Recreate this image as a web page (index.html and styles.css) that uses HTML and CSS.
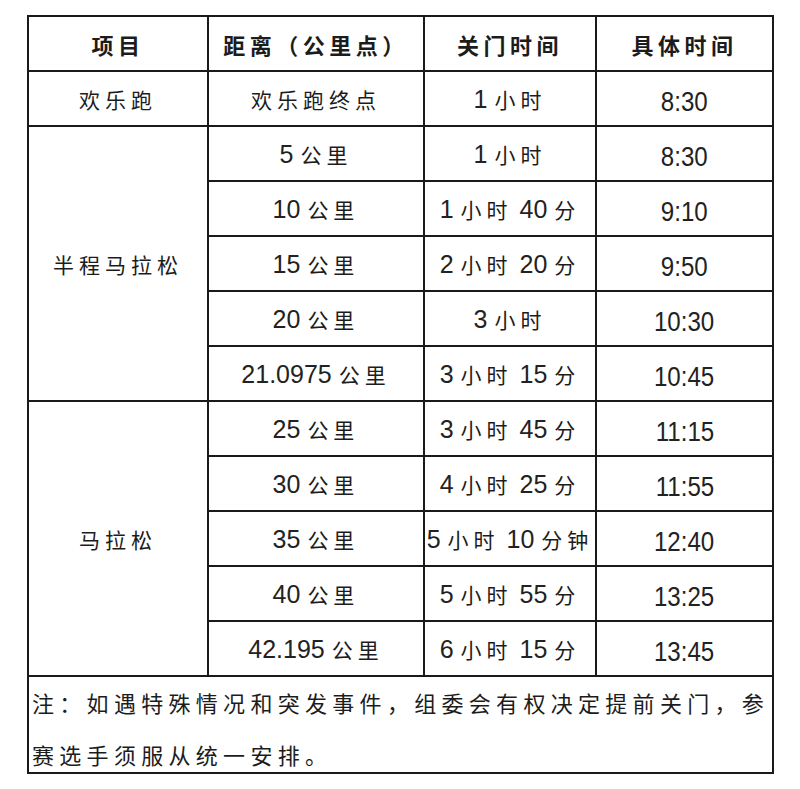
FILE: index.html
```
<!DOCTYPE html>
<html lang="zh-CN">
<head>
<meta charset="utf-8">
<link rel="stylesheet" href="styles.css">
</head>
<body>
<table class="sched">
  <colgroup>
    <col class="c1"><col class="c2"><col class="c3"><col class="c4">
  </colgroup>
  <thead>
    <tr class="head"><th>项目</th><th>距离（公里点）</th><th>关门时间</th><th>具体时间</th></tr>
  </thead>
  <tbody>
    <tr><td>欢乐跑</td><td>欢乐跑终点</td><td><span class="n">1 </span>小时</td><td class="t"><span class="tn">8:30</span></td></tr>
    <tr><td rowspan="5">半程马拉松</td><td><span class="n">5 </span>公里</td><td><span class="n">1 </span>小时</td><td class="t"><span class="tn">8:30</span></td></tr>
    <tr><td><span class="n">10 </span>公里</td><td><span class="n">1 </span>小时<span class="n"> 40 </span>分</td><td class="t"><span class="tn">9:10</span></td></tr>
    <tr><td><span class="n">15 </span>公里</td><td><span class="n">2 </span>小时<span class="n"> 20 </span>分</td><td class="t"><span class="tn">9:50</span></td></tr>
    <tr><td><span class="n">20 </span>公里</td><td><span class="n">3 </span>小时</td><td class="t"><span class="tn">10:30</span></td></tr>
    <tr><td><span class="n">21.0975 </span>公里</td><td><span class="n">3 </span>小时<span class="n"> 15 </span>分</td><td class="t"><span class="tn">10:45</span></td></tr>
    <tr><td rowspan="5">马拉松</td><td><span class="n">25 </span>公里</td><td><span class="n">3 </span>小时<span class="n"> 45 </span>分</td><td class="t"><span class="tn">11:15</span></td></tr>
    <tr><td><span class="n">30 </span>公里</td><td><span class="n">4 </span>小时<span class="n"> 25 </span>分</td><td class="t"><span class="tn">11:55</span></td></tr>
    <tr><td><span class="n">35 </span>公里</td><td><span class="n">5 </span>小时<span class="n"> 10 </span>分钟</td><td class="t"><span class="tn">12:40</span></td></tr>
    <tr><td><span class="n">40 </span>公里</td><td><span class="n">5 </span>小时<span class="n"> 55 </span>分</td><td class="t"><span class="tn">13:25</span></td></tr>
    <tr><td><span class="n">42.195 </span>公里</td><td><span class="n">6 </span>小时<span class="n"> 15 </span>分</td><td class="t"><span class="tn">13:45</span></td></tr>
    <tr class="note"><td colspan="4"><div class="note-text">注：如遇特殊情况和突发事件，组委会有权决定提前关门，参赛选手须服从统一安排。</div></td></tr>
  </tbody>
</table>
</body>
</html>
```
FILE: styles.css
```
html, body {
  margin: 0;
  padding: 0;
  background: #ffffff;
}
body {
  padding: 15px 0 0 27px;
  color: #1c1c1c;
  font-family: "Noto Sans CJK SC", sans-serif;
}
.sched {
  border-collapse: collapse;
  table-layout: fixed;
  width: 745px;
}
.c1 { width: 180px; }
.c2 { width: 216px; }
.c3 { width: 172px; }
.c4 { width: 177px; }
.sched th,
.sched td {
  border: 2px solid #1a1a1a;
  padding: 0;
  text-align: center;
  vertical-align: middle;
  font-size: 21px;
  line-height: 26px;
  letter-spacing: 5px;
  height: 53px;
  font-weight: 400;
  white-space: nowrap;
}
.sched th {
  font-weight: 700;
  font-size: 22px;
  letter-spacing: 4.5px;
}
.n {
  font-family: "Liberation Sans", sans-serif;
  font-size: 25px;
  letter-spacing: 0;
  white-space: pre;
  color: #222222;
}
.sched td.t {
  letter-spacing: 0;
  padding-top: 6px;
  height: 47px;
}
.tn {
  display: inline-block;
  font-family: "Liberation Sans", sans-serif;
  font-size: 28px;
  letter-spacing: 0;
  color: #222222;
  transform: scaleX(0.86);
}
.sched .note td {
  text-align: left;
  white-space: normal;
  vertical-align: top;
  font-size: 22px;
  letter-spacing: 5.3px;
  line-height: 52px;
  height: 95px;
  padding: 0 0 0 3px;
}
.note-text {
  margin: -1px 0 -10px;
  height: 95px;
  overflow: visible;
}
```
